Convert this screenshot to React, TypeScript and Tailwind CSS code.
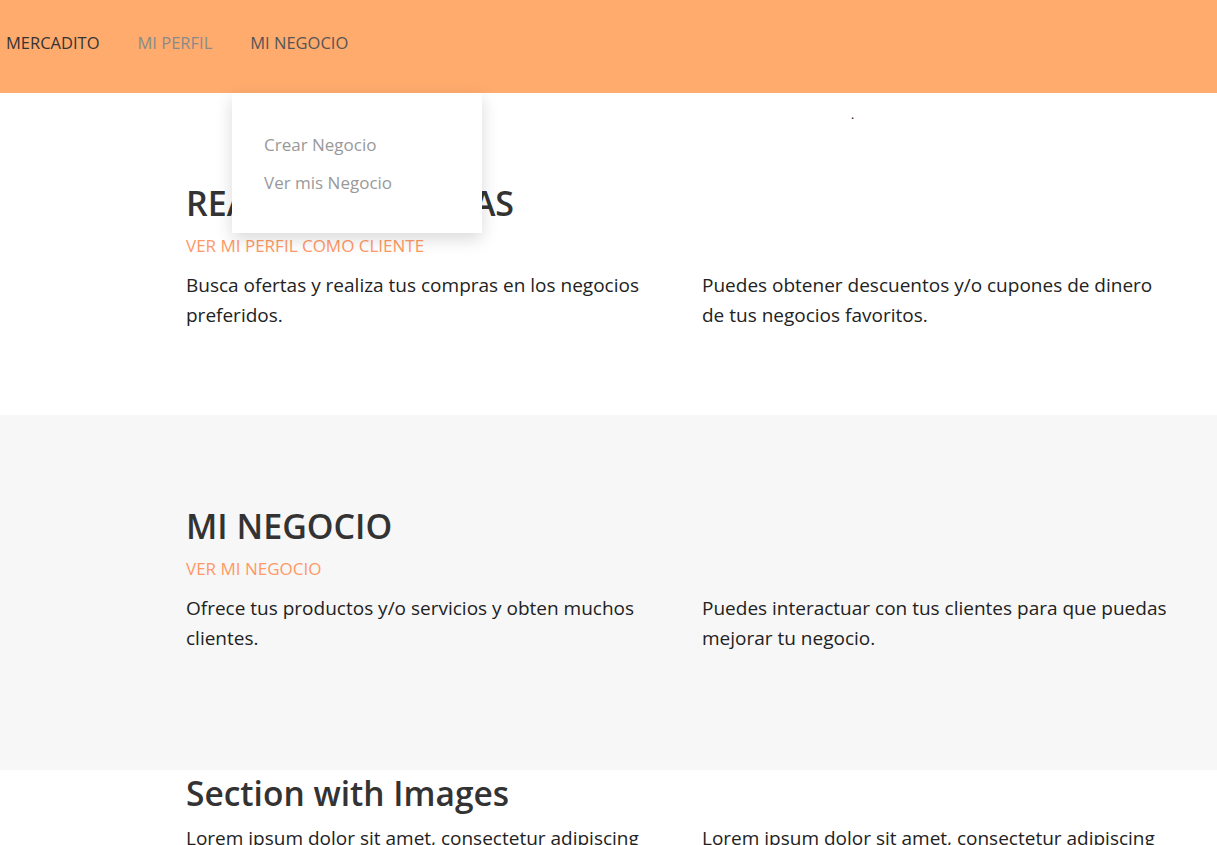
export default function App() {
  return (
    <div className="min-h-screen bg-white text-[#333] font-['Open_Sans',sans-serif]">
      {/* Navbar */}
      <nav className="relative h-[93px] bg-[#ffab6e] flex items-center px-[6px] pb-[6px] gap-[38px] text-[16.5px]">
        <a className="text-[#333]">MERCADITO</a>
        <a className="text-[#8a8a8a]">MI PERFIL</a>
        <div className="relative">
          <a className="text-[#555]">MI NEGOCIO</a>
        </div>
        {/* Dropdown */}
        <div className="absolute left-[232px] top-[93px] w-[250px] h-[140px] bg-white shadow-[0_6px_16px_rgba(0,0,0,0.15)] z-10 pt-[40px] pl-[32px] flex flex-col gap-[15px] text-[17px] leading-[23px] text-[#999]">
          <a>Crear Negocio</a>
          <a>Ver mis Negocio</a>
        </div>
      </nav>

      {/* Section 1 */}
      <section className="relative h-[322px] pl-[186px] pt-[88px]">
        <span className="absolute left-[851px] top-[16px] text-[12px] leading-none text-black">.</span>
        <h2 className="text-[34px] font-semibold leading-[44px] text-[#333]">REALIZAR COMPRAS</h2>
        <p className="text-[17px] text-[#ff9966] mt-[9px] leading-[24px]">VER MI PERFIL COMO CLIENTE</p>
        <div className="grid grid-cols-[470px_470px] gap-x-[46px] mt-[12px] text-[19px] leading-[30px] text-[#222]">
          <p>Busca ofertas y realiza tus compras en los negocios preferidos.</p>
          <p>Puedes obtener descuentos y/o cupones de dinero de tus negocios favoritos.</p>
        </div>
      </section>

      {/* Section 2 */}
      <section className="h-[355px] bg-[#f7f7f7] pl-[186px] pt-[89px]">
        <h2 className="text-[34px] font-semibold leading-[44px] text-[#333]">MI NEGOCIO</h2>
        <p className="text-[17px] text-[#ff9966] mt-[9px] leading-[24px]">VER MI NEGOCIO</p>
        <div className="grid grid-cols-[470px_470px] gap-x-[46px] mt-[12px] text-[19px] leading-[30px] text-[#222]">
          <p>Ofrece tus productos y/o servicios y obten muchos clientes.</p>
          <p>Puedes interactuar con tus clientes para que puedas mejorar tu negocio.</p>
        </div>
      </section>

      {/* Section 3 */}
      <section className="pl-[186px] pt-[1px] pb-[40px]">
        <h2 className="text-[33.5px] font-semibold leading-[44px] text-[#333]">Section with Images</h2>
        <div className="grid grid-cols-[470px_470px] gap-x-[46px] mt-[8px] text-[19px] leading-[30px] text-[#222]">
          <p>Lorem ipsum dolor sit amet, consectetur adipiscing elit, sed do eiusmod tempor incididunt ut labore et dolore magna aliqua.</p>
          <p>Lorem ipsum dolor sit amet, consectetur adipiscing elit, sed do eiusmod tempor incididunt ut labore et dolore magna aliqua.</p>
        </div>
      </section>
    </div>
  );
}
